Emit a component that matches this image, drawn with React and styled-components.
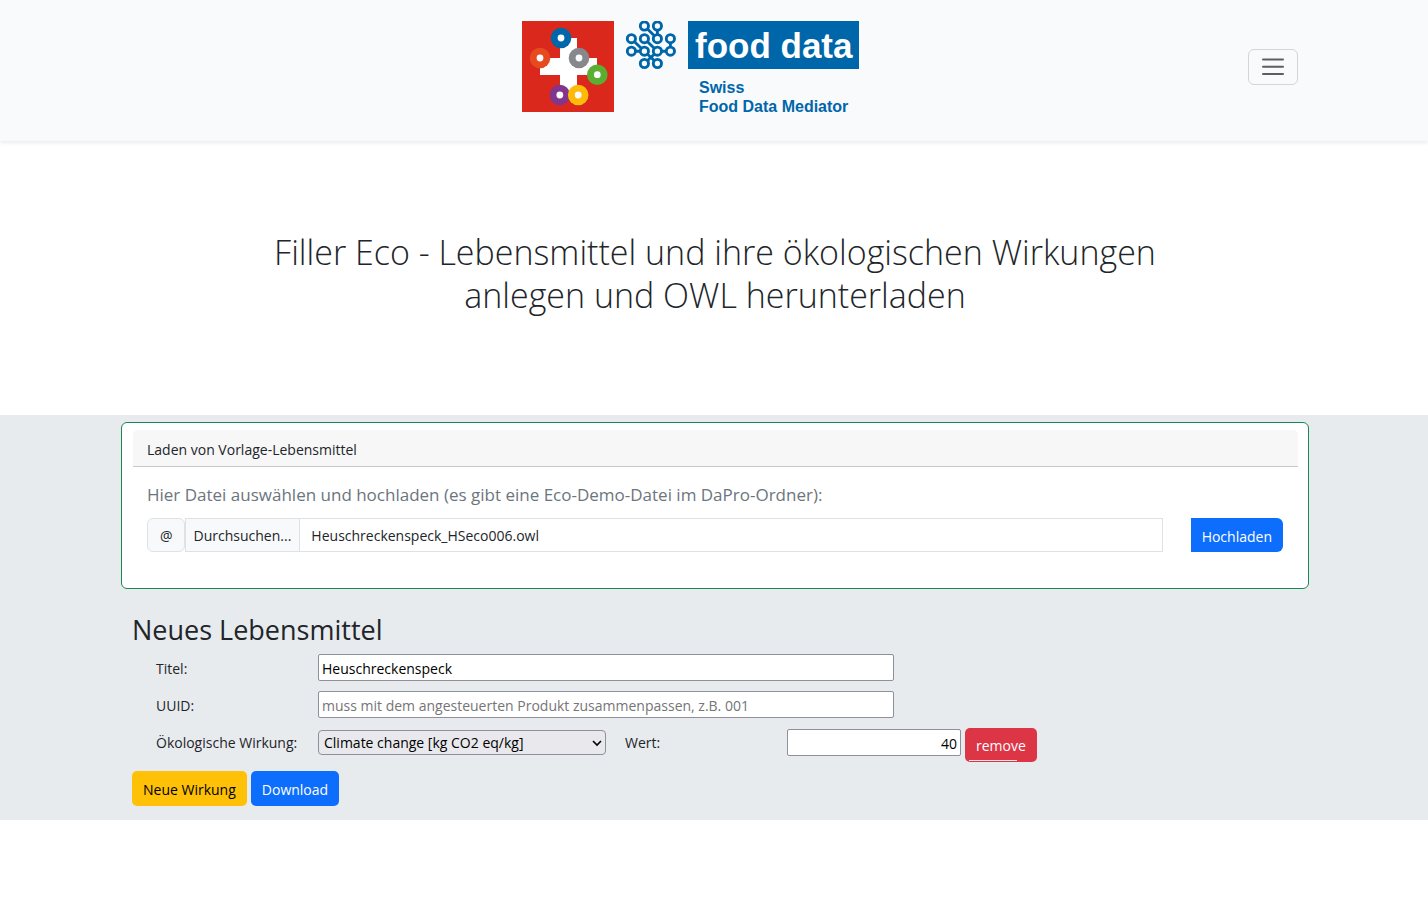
import React from "react";
import styled, { createGlobalStyle } from "styled-components";

const sans = `"Open Sans", "Noto Sans", sans-serif`;

const GlobalStyle = createGlobalStyle`
  *, *::before, *::after { box-sizing: border-box; }
  body {
    margin: 0;
    background: #fff;
    color: #212529;
    font-family: ${sans};
    font-size: 14px;
    line-height: 22px;
  }
  button, input, select { font: inherit; }
`;

const Header = styled.header`
  display: flex;
  align-items: center;
  height: 141px;
  padding: 0 130px 8px 134px;
  background: #f8fafc;
  box-shadow: 0 2px 4px rgba(0, 0, 0, 0.08);
`;

const Brand = styled.a`
  display: flex;
  flex: 1;
  justify-content: center;
  padding-top: 4px;
`;

const Toggler = styled.button`
  display: flex;
  align-items: center;
  justify-content: center;
  width: 50px;
  height: 36px;
  padding: 0;
  border: 1px solid #d3d5d8;
  border-radius: 6px;
  background: transparent;
`;

const Hero = styled.section`
  display: flex;
  justify-content: center;
  padding: 90px 120px 98px 122px;
`;

const Title = styled.h1`
  max-width: 920px;
  margin: 0;
  font-size: 34px;
  font-weight: 300;
  line-height: 43px;
  text-align: center;
`;

const Workspace = styled.main`
  padding: 7px 119px 14px 121px;
  background: #e8ebee;
`;

const Card = styled.section`
  padding: 7px 10px 36px 11px;
  border: 1px solid #198754;
  border-radius: 6px;
  background: #fff;
`;

const CardHeader = styled.div`
  padding: 9px 14px 5px;
  border-bottom: 1px solid #c8c8c8;
  border-radius: 5px 5px 0 0;
  background: #f7f7f7;
`;

const CardBody = styled.div`
  padding: 16px 15px 0 14px;
`;

const Hint = styled.p`
  margin: 0 0 12px;
  color: #6c757d;
  font-size: 17px;
  line-height: 23px;
`;

const UploadRow = styled.div`
  display: flex;
  height: 34px;
`;

const Addon = styled.span`
  display: flex;
  align-items: center;
  padding: 2px 11px 0 12px;
  border: 1px solid #dee2e6;
  border-radius: 6px;
  background: #f8f9fa;
`;

const Browse = styled.button`
  padding: 2px 8px 0;
  border: 1px solid #dee2e6;
  background: #f8f9fa;
  color: #212529;
`;

const FileName = styled.input`
  flex: 1;
  min-width: 0;
  margin-right: 28px;
  padding: 2px 11px 0;
  border: 1px solid #dee2e6;
  border-left: 0;
  background: #fff;
  color: #212529;
`;

const tones = {
  primary: ["#0d6efd", "#fff"],
  warning: ["#ffc107", "#000"],
  danger: ["#dc3545", "#fff"],
};

const Button = styled.button`
  height: ${(p) => (p.$tall ? 35 : 34)}px;
  padding: 3px 11px 0;
  border: 0;
  border-radius: ${(p) => (p.$joined ? "0 6px 6px 0" : "5px")};
  background: ${(p) => tones[p.$tone][0]};
  color: ${(p) => tones[p.$tone][1]};
`;

const SectionTitle = styled.h2`
  margin: 23px 0 7px;
  font-size: 27px;
  font-weight: 400;
  line-height: 35px;
`;

const Form = styled.form`
  padding: 0 11px;
`;

const Row = styled.div`
  display: flex;
  align-items: flex-start;
  min-height: ${(p) => p.$height}px;
  margin-bottom: ${(p) => p.$gap}px;
  padding-left: 24px;
`;

const Label = styled.label`
  width: 162px;
  padding-top: 4px;
`;

const Field = styled.input`
  width: ${(p) => p.$width}px;
  height: 27px;
  margin-top: ${(p) => p.$top || 0}px;
  padding: 2px 3px 0;
  border: 1px solid #8f8f9d;
  border-radius: 2px;
  background: #fff;
  color: #000;
  text-align: ${(p) => p.$align || "left"};
  &::placeholder { color: #757575; opacity: 1; }
`;

const SelectBox = styled.div`
  display: grid;
  align-items: center;
  width: 288px;
  margin: 2px 19px 0 0;
  > * { grid-area: 1 / 1; }
  > svg { justify-self: end; margin-right: 4px; pointer-events: none; }
`;

const Select = styled.select`
  appearance: none;
  width: 100%;
  height: 25px;
  padding: 1px 20px 0 5px;
  border: 1px solid #8f8f9d;
  border-radius: 4px;
  background: #e9e9ed;
  color: #000;
`;

const RemoveButton = styled(Button)`
  display: flex;
  flex-direction: column;
  margin-left: 4px;
  padding: 7px 11px 0;
  &::after {
    content: "";
    width: 48px;
    height: 1px;
    margin: 3px 0 0 -7px;
    background: #f8e6e8;
  }
`;

const Actions = styled.div`
  display: flex;
  gap: 4px;
`;

const nodes = [
  [134, 16], [147, 16],
  [121, 28.7], [134, 28.7], [147, 28.7], [160, 28.7],
  [121, 41.2], [134, 41.2], [147, 41.2], [160, 41.2],
  [134, 53.5], [147, 53.5],
];
const rings = [
  [39, 17, "#0066aa"],
  [18, 37, "#e84a20"],
  [57, 37, "#87888c"],
  [75.3, 53.7, "#5aaf32"],
  [37.8, 74, "#83358b"],
  [56.2, 74, "#fdba09"],
];

function Logo() {
  return (
    <svg width="338" height="96" viewBox="0 0 338 96" role="img" aria-label="food data – Swiss Food Data Mediator">
      <rect width="92" height="91" fill="#da291c" />
      <path d="M38 17h17v20h20v17H55v20H38V54H18V37h20z" fill="#fff" />
      {rings.map(([x, y, c]) => (
        <g key={c}>
          <circle cx={x} cy={y} r="10.3" fill={c} />
          <circle cx={x} cy={y} r="3.4" fill="#f8fafc" />
        </g>
      ))}
      <g transform="translate(-11.6 -11)" stroke="#0066aa" strokeWidth="2.9" fill="none">
        <path d="M134 16L147 28.7M147 16V28.7M121 28.7L134 41.2M134 28.7L147 41.2M160 28.7V41.2M121 41.2H134M147 41.2H160M134 41.2L147 53.5M147 41.2L134 53.5" />
        {nodes.map(([x, y]) => (
          <circle key={`${x}-${y}`} cx={x} cy={y} r="4.1" fill="#f8fafc" />
        ))}
      </g>
      <rect x="166" width="171" height="48" fill="#0066aa" />
      <g fontFamily="Liberation Sans, Arial, sans-serif" fontWeight="700">
        <text x="173" y="37" fontSize="35" fill="#fff">food data</text>
        <g fontSize="16" fill="#0066aa">
          <text x="177" y="72">Swiss</text>
          <text x="177" y="91">Food Data Mediator</text>
        </g>
      </g>
    </svg>
  );
}

export default function App() {
  return (
    <>
      <GlobalStyle />
      <Header>
        <Brand href="#"><Logo /></Brand>
        <Toggler type="button" aria-label="Menü">
          <svg width="26" height="26" viewBox="0 0 26 26" stroke="#5c5e61" strokeWidth="2" strokeLinecap="round">
            <path d="M3 5.5H23M3 12.7H23M3 20H23" />
          </svg>
        </Toggler>
      </Header>
      <Hero>
        <Title>Filler Eco - Lebensmittel und ihre ökologischen Wirkungen anlegen und OWL herunterladen</Title>
      </Hero>
      <Workspace>
        <Card>
          <CardHeader>Laden von Vorlage-Lebensmittel</CardHeader>
          <CardBody>
            <Hint id="hint">Hier Datei auswählen und hochladen (es gibt eine Eco-Demo-Datei im DaPro-Ordner):</Hint>
            <UploadRow>
              <Addon>@</Addon>
              <Browse type="button">Durchsuchen...</Browse>
              <FileName readOnly aria-labelledby="hint" value="Heuschreckenspeck_HSeco006.owl" />
              <Button type="button" $tone="primary" $joined>Hochladen</Button>
            </UploadRow>
          </CardBody>
        </Card>
        <Form onSubmit={(e) => e.preventDefault()}>
          <SectionTitle>Neues Lebensmittel</SectionTitle>
          <Row $height={27} $gap={10}>
            <Label htmlFor="titel">Titel:</Label>
            <Field id="titel" $width={576} defaultValue="Heuschreckenspeck" />
          </Row>
          <Row $height={27} $gap={10}>
            <Label htmlFor="uuid">UUID:</Label>
            <Field id="uuid" $width={576} placeholder="muss mit dem angesteuerten Produkt zusammenpassen, z.B. 001" />
          </Row>
          <Row $height={34} $gap={9}>
            <Label htmlFor="wirkung">Ökologische Wirkung:</Label>
            <SelectBox>
              <Select id="wirkung" defaultValue="climate">
                <option value="climate">Climate change [kg CO2 eq/kg]</option>
              </Select>
              <svg width="10" height="10" viewBox="0 0 10 10" fill="none" stroke="#000" strokeWidth="1.6">
                <path d="M1 3L5 7L9 3" />
              </svg>
            </SelectBox>
            <Label htmlFor="wert">Wert:</Label>
            <Field id="wert" $width={174} $top={1} $align="right" defaultValue="40" />
            <RemoveButton type="button" $tone="danger">remove</RemoveButton>
          </Row>
          <Actions>
            <Button type="button" $tone="warning" $tall>Neue Wirkung</Button>
            <Button type="button" $tone="primary" $tall>Download</Button>
          </Actions>
        </Form>
      </Workspace>
    </>
  );
}
